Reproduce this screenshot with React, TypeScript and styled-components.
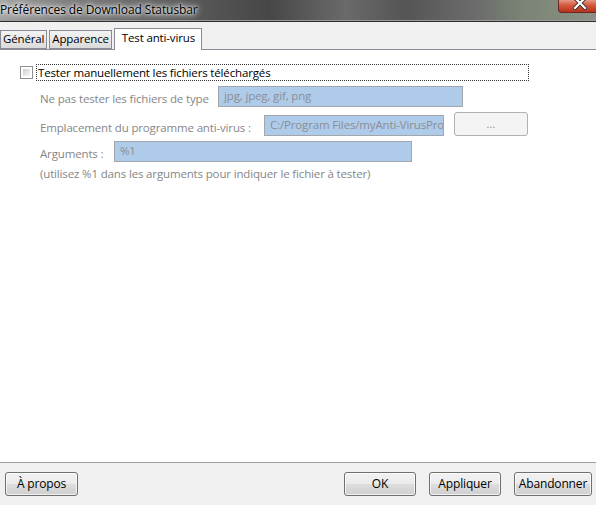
import React from "react";
import styled, { createGlobalStyle } from "styled-components";

const GlobalStyle = createGlobalStyle`
  html, body {
    margin: 0;
    padding: 0;
    height: 100%;
  }
  body {
    font-family: "Open Sans", "Noto Sans", sans-serif;
    font-size: 11.5px;
    letter-spacing: -0.15px;
    overflow: hidden;
  }
  #root {
    height: 100%;
  }
`;

const Window = styled.div`
  display: flex;
  flex-direction: column;
  width: 596px;
  height: 505px;
  background: #fff;
  overflow: hidden;
`;

const TitleBar = styled.div`
  display: flex;
  align-items: flex-start;
  height: 21px;
  flex: none;
  background: linear-gradient(
    90deg,
    #a2a2a2 0%,
    #7a7a7a 12%,
    #5c5c5c 30%,
    #474747 45%,
    #6a6a6a 58%,
    #555 68%,
    #6c6c6c 80%,
    #7b8574 88%,
    #8c9187 100%
  );
  border-bottom: 1px solid #2e2e2e;
  box-shadow: inset 0 -1px 0 #9a9a9a;
`;

const Title = styled.div`
  padding: 2px 0 0 0;
  line-height: 16px;
  color: #000;
  font-size: 12px;
  letter-spacing: -0.1px;
  text-shadow: 0 0 6px #fff, 0 0 8px rgba(255, 255, 255, 0.9), 0 0 3px #fff;
  white-space: nowrap;
`;

const CloseButton = styled.div`
  flex: none;
  margin-left: auto;
  width: 38px;
  height: 13px;
  background-color: #c4442b;
  background-image: linear-gradient(180deg, #e49a86 0%, #d4583c 45%, #b5321c 100%);
  border-left: 1px solid #6b2a1f;
  border-bottom: 1px solid #6b2a1f;
  border-radius: 0 0 0 4px;
  display: flex;
  justify-content: flex-end;
  align-items: flex-start;
  padding-right: 9px;
  box-sizing: border-box;
  overflow: hidden;
`;

const TabStrip = styled.div`
  display: flex;
  align-items: flex-end;
  height: 28px;
  flex: none;
  background: #f0f0f0;
  border-bottom: 1px solid #898c95;
  box-sizing: border-box;
`;

const Tab = styled.div<{ $active?: boolean }>`
  box-sizing: border-box;
  height: ${(p) => (p.$active ? "22px" : "19px")};
  margin-bottom: ${(p) => (p.$active ? "-1px" : "0")};
  margin-right: ${(p) => (p.$active ? "0" : "2px")};
  padding: ${(p) => (p.$active ? "1px 6px 0 7px" : "0 2px 0 2px")};
  border: 1px solid #898c95;
  border-bottom: ${(p) => (p.$active ? "none" : "1px solid #898c95")};
  background: ${(p) =>
    p.$active ? "#fff" : "linear-gradient(180deg, #f3f3f3 0%, #e8e8e8 50%, #dadada 100%)"};
  line-height: 16px;
  font-size: 11.5px;
  color: #000;
  white-space: nowrap;
`;

const Content = styled.div`
  flex: 1;
  background: #fff;
  padding: 14px 0 0 20px;
  display: flex;
  flex-direction: column;
`;

const CheckRow = styled.div`
  display: flex;
  align-items: center;
  height: 17px;
`;

const CheckBox = styled.div`
  width: 13px;
  height: 13px;
  flex: none;
  box-sizing: border-box;
  border: 1px solid #8e8f8f;
  background: #fff;
  padding: 2px;
  & > div {
    width: 100%;
    height: 100%;
    background: linear-gradient(135deg, #cbcfd5 0%, #e6e8ea 60%, #f6f6f6 100%);
  }
`;

const FocusLabel = styled.div`
  margin-left: 3px;
  width: 493px;
  height: 17px;
  box-sizing: border-box;
  border: 1px dotted #333;
  padding: 0 1px;
  line-height: 15px;
  color: #000;
  white-space: nowrap;
`;

const FieldRow = styled.div<{ $top: number }>`
  display: flex;
  align-items: flex-end;
  margin: ${(p) => p.$top}px 0 0 20px;
`;

const FieldLabel = styled.div<{ $width: number }>`
  width: ${(p) => p.$width}px;
  flex: none;
  line-height: 16px;
  color: #868686;
  white-space: nowrap;
`;

const Field = styled.div<{ $width: number }>`
  width: ${(p) => p.$width}px;
  height: 21px;
  flex: none;
  box-sizing: border-box;
  border: 1px solid #a3a7ab;
  background: #afcbea;
  padding: 1px 5px 0 5px;
  line-height: 16px;
  color: #8a8e94;
  white-space: nowrap;
  overflow: hidden;
`;

const BrowseButton = styled.div`
  margin-left: 10px;
  width: 74px;
  height: 24px;
  flex: none;
  box-sizing: border-box;
  border: 1px solid #adb2b5;
  border-radius: 3px;
  background: #f4f4f4;
  color: #8a8a8a;
  display: flex;
  align-items: center;
  justify-content: center;
  font-size: 10px;
  letter-spacing: 0.4px;
`;

const Note = styled.div`
  margin: 4px 0 0 20px;
  line-height: 16px;
  color: #868686;
  white-space: nowrap;
`;

const Footer = styled.div`
  flex: none;
  height: 43px;
  box-sizing: border-box;
  border-top: 1px solid #a0a0a0;
  background: #f0f0f0;
  display: flex;
  align-items: flex-start;
  padding: 9px 4px 0 5px;
  gap: 13px;
`;

const Button = styled.button<{ $width: number; $push?: boolean }>`
  width: ${(p) => p.$width}px;
  height: 24px;
  flex: none;
  margin-left: ${(p) => (p.$push ? "auto" : "0")};
  box-sizing: border-box;
  border: 1px solid #707070;
  border-radius: 3px;
  background: linear-gradient(180deg, #f2f2f2 0%, #ebebeb 48%, #dddddd 52%, #cfcfcf 100%);
  box-shadow: inset 0 0 0 1px rgba(255, 255, 255, 0.7);
  font-family: "Open Sans", "Noto Sans", sans-serif;
  font-size: 12px;
  letter-spacing: -0.15px;
  color: #000;
  padding: 0;
  line-height: 16px;
`;

const CloseIcon = () => (
  <svg width="14" height="10" viewBox="0 0 14 10">
    <path d="M2 -2 L12 8 M12 -2 L2 8" stroke="#3a2a2a" strokeWidth="4" strokeLinecap="square" />
    <path d="M2 -2 L12 8 M12 -2 L2 8" stroke="#fff" strokeWidth="2.2" strokeLinecap="square" />
  </svg>
);

export default function App() {
  return (
    <Window>
      <GlobalStyle />
      <TitleBar>
        <Title>Préférences de Download Statusbar</Title>
        <CloseButton>
          <CloseIcon />
        </CloseButton>
      </TitleBar>
      <TabStrip>
        <Tab>Général</Tab>
        <Tab>Apparence</Tab>
        <Tab $active>Test anti-virus</Tab>
      </TabStrip>
      <Content>
        <CheckRow>
          <CheckBox>
            <div />
          </CheckBox>
          <FocusLabel>Tester manuellement les fichiers téléchargés</FocusLabel>
        </CheckRow>
        <FieldRow $top={5}>
          <FieldLabel $width={178}>Ne pas tester les fichiers de type</FieldLabel>
          <Field $width={245}>jpg, jpeg, gif, png</Field>
        </FieldRow>
        <FieldRow $top={5}>
          <FieldLabel $width={224}>Emplacement du programme anti-virus :</FieldLabel>
          <Field $width={180}>C:/Program Files/myAnti-VirusProgram.exe</Field>
          <BrowseButton>...</BrowseButton>
        </FieldRow>
        <FieldRow $top={5}>
          <FieldLabel $width={74}>Arguments :</FieldLabel>
          <Field $width={298}>%1</Field>
        </FieldRow>
        <Note>(utilisez %1 dans les arguments pour indiquer le fichier à tester)</Note>
      </Content>
      <Footer>
        <Button $width={73}>À propos</Button>
        <Button $width={72} $push>
          OK
        </Button>
        <Button $width={72}>Appliquer</Button>
        <Button $width={78}>Abandonner</Button>
      </Footer>
    </Window>
  );
}
